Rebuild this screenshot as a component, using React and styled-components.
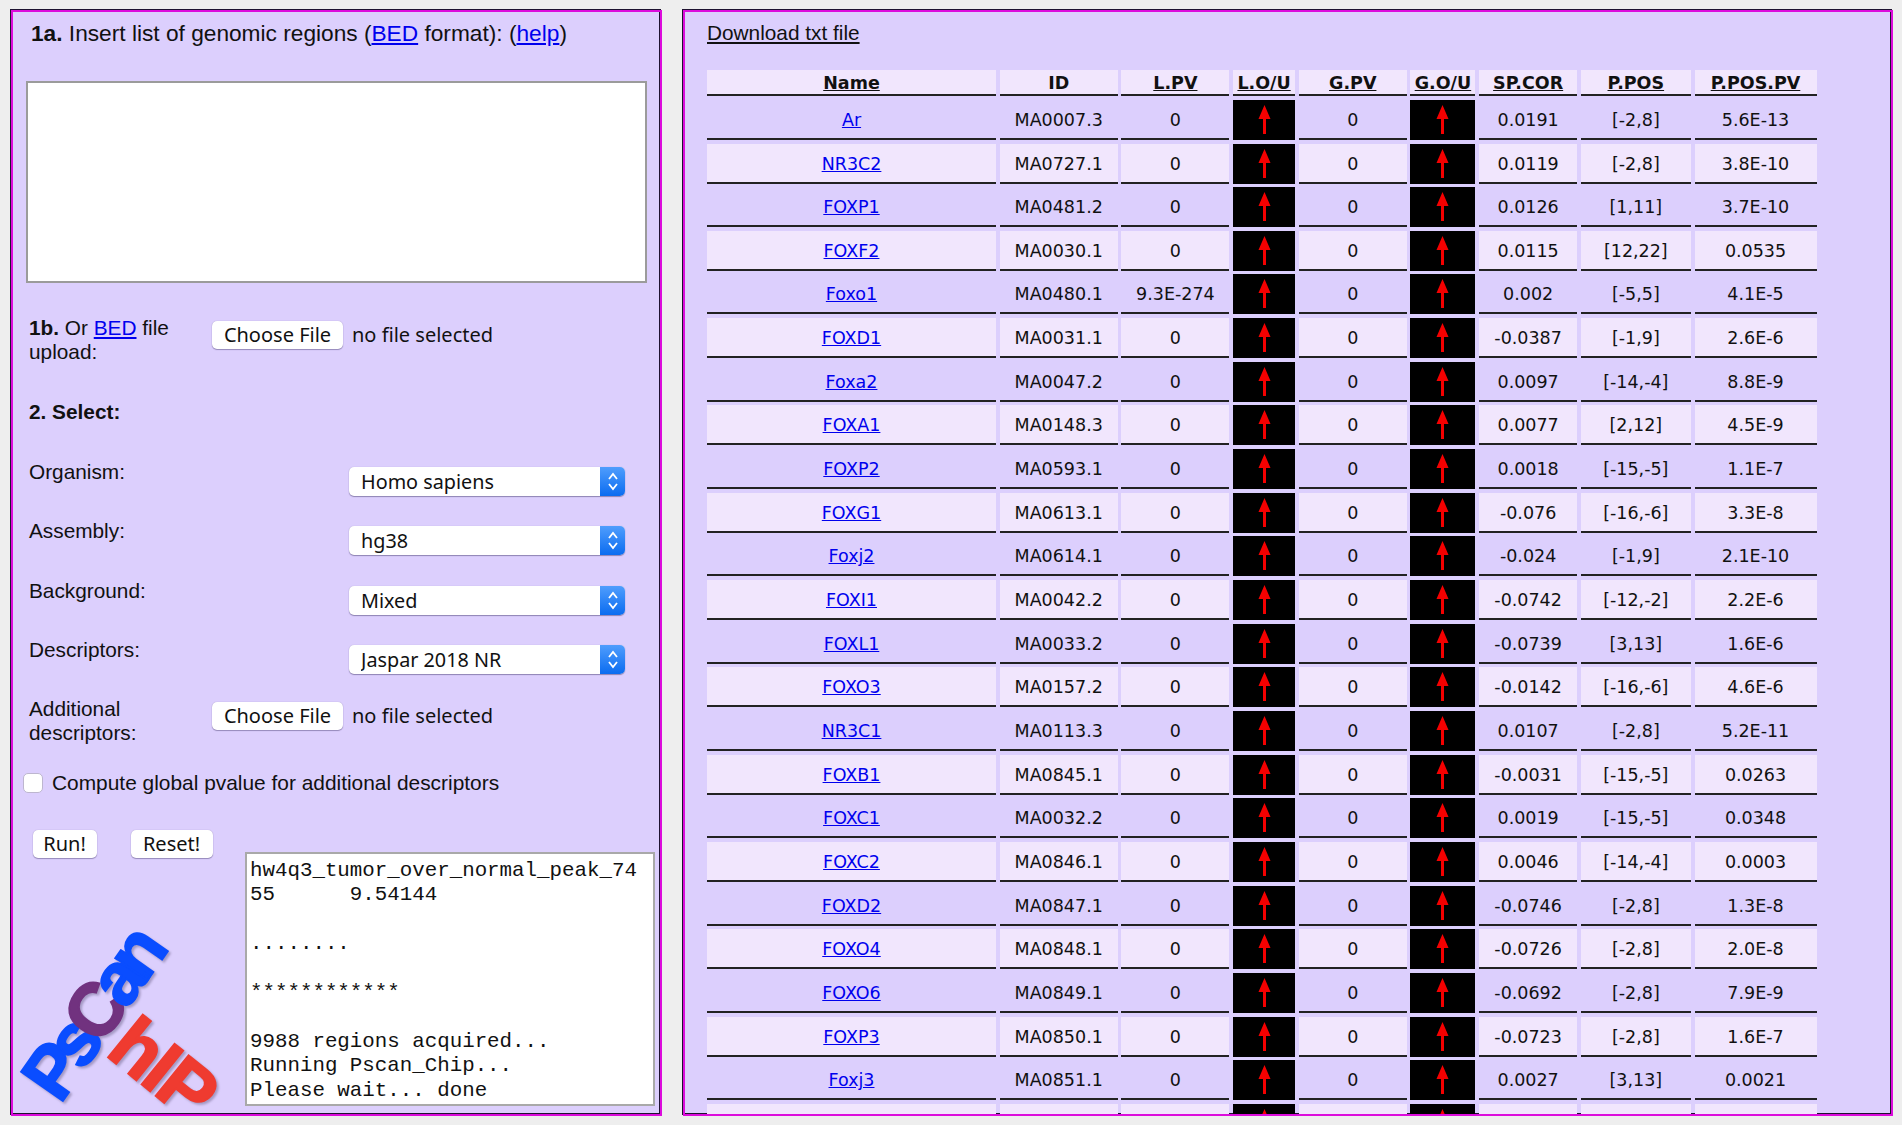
import React from 'react';
import styled, {createGlobalStyle} from 'styled-components';

const GlobalStyle = createGlobalStyle`
  html, body {
    margin: 0;
    padding: 0;
    background: #eeeeee;
  }
  body {
    font-family: "Liberation Sans", Arial, sans-serif;
    color: #111;
  }
`;

const Page = styled.div`
  display: flex;
  gap: 21px;
  padding: 10px 0 0 11px;
  width: 1902px;
  height: 1125px;
  box-sizing: border-box;
  overflow: hidden;
`;

const Panel = styled.div`
  box-sizing: border-box;
  height: 1106px;
  flex: none;
  width: ${props => props.$width}px;
  padding: ${props => props.$padding};
  background: #dccffd;
  border: 2px solid #dc0cdc;
  box-shadow: inset -1px -1px 0 #1e1230, -1px -1px 0 #1e1230;
  overflow: hidden;
`;

const Text = styled.div`
  font-size: 20.8px;
  line-height: 24.5px;
`;

const Title = styled(Text)`
  margin-left: 18px;
  font-size: 22.7px;
  white-space: nowrap;
`;

const Link = styled.a`
  color: #0000ee;
  text-decoration: underline;
`;

const RegionsInput = styled.textarea`
  display: block;
  box-sizing: border-box;
  width: 621px;
  height: 202px;
  margin: 35px 0 0 13px;
  border: 2px solid #9b9b9b;
  background: #fff;
  resize: none;
  outline: none;
`;

const UploadRow = styled.div`
  display: grid;
  grid-template-columns: 183px auto;
  margin: ${props => props.$margin} 0 0 16px;
`;

const FileField = styled.div`
  display: flex;
  align-items: center;
  gap: 9px;
  height: 28px;
  margin-top: ${props => props.$top}px;
`;

const PlainButton = styled.button`
  box-sizing: border-box;
  height: 28px;
  padding: 0;
  width: ${props => props.$width}px;
  border: none;
  border-radius: 5px;
  background: #fff;
  box-shadow: 0 1px 1px rgba(70, 60, 110, 0.45), 0 0 1px rgba(70, 60, 110, 0.4);
  font-family: "Noto Sans", sans-serif;
  font-size: 20px;
  color: #111;
`;

const FileState = styled.span`
  font-family: "Noto Sans", sans-serif;
  font-size: 20px;
  color: #111;
`;

const SectionHead = styled(Text)`
  margin: 35px 0 0 16px;
  font-weight: bold;
`;

const SelectRow = styled.div`
  display: grid;
  grid-template-columns: 320px 276px;
  height: 37px;
  margin: ${props => props.$top}px 0 0 16px;
`;

const SelectBox = styled.div`
  position: relative;
  height: 29px;
  margin-top: 7px;
`;

const NativeSelect = styled.select`
  appearance: none;
  display: block;
  width: 100%;
  height: 29px;
  padding: 0 0 0 12px;
  border: none;
  border-radius: 5px;
  background: #fff;
  box-shadow: 0 1px 1px rgba(70, 60, 110, 0.5), 0 0 1px rgba(70, 60, 110, 0.3);
  font-family: "Noto Sans", sans-serif;
  font-size: 19.8px;
  color: #111;
`;

const Stepper = styled.span`
  position: absolute;
  top: 0;
  right: 0;
  bottom: 0;
  width: 25px;
  display: flex;
  align-items: center;
  justify-content: center;
  border-radius: 0 5px 5px 0;
  background: linear-gradient(#4f9dfd, #0b6cf0);
  pointer-events: none;
`;

const CheckRow = styled.label`
  display: flex;
  align-items: center;
  gap: 9.5px;
  margin: 25px 0 0 9.5px;
  font-size: 20.9px;
  line-height: 24px;
`;

const Check = styled.input`
  appearance: none;
  box-sizing: border-box;
  width: 20px;
  height: 20px;
  margin: 0;
  border: 1px solid #bdb6cf;
  border-radius: 5px;
  background: #fff;
`;

const BottomRow = styled.div`
  display: flex;
  margin-top: 35px;
`;

const LeftColumn = styled.div`
  flex: none;
  width: 232px;
`;

const Actions = styled.div`
  display: flex;
  gap: 34px;
  margin-left: 19.5px;
`;

const Logo = styled.svg`
  display: block;
  margin-top: 53px;
  overflow: visible;
  filter: drop-shadow(2px 2px 1px rgba(110, 100, 140, 0.5));
  font-family: "Liberation Sans", Arial, sans-serif;
  font-weight: bold;
`;

const Output = styled.pre`
  box-sizing: border-box;
  flex: none;
  width: 410px;
  height: 254px;
  margin: 22px 0 0;
  padding: 5px 0 0 3px;
  border: 2px solid #a9a9a9;
  background: #fff;
  font-family: "Liberation Mono", monospace;
  font-size: 20.8px;
  line-height: 24.4px;
  color: #111;
  overflow: hidden;
`;

const Download = styled(Text)`
  color: #111;
  text-decoration: underline;
`;

const Grid = styled.div`
  display: grid;
  grid-template-columns: 289px 118px 108px 62px 108px 65px 98px 110px 122px;
  grid-template-rows: 26px;
  grid-auto-rows: 40px;
  column-gap: 3.7px;
  row-gap: 3.67px;
  margin-top: 24.7px;
  width: max-content;
`;

const Cell = styled.div`
  box-sizing: border-box;
  display: flex;
  align-items: center;
  justify-content: center;
  padding-top: 2px;
  background: ${props => (props.$light ? '#f1e6fd' : 'transparent')};
  border-bottom: 2px solid #222;
  font-family: "DejaVu Sans", sans-serif;
  font-size: 17.5px;
  color: #111;
  white-space: nowrap;
`;

const HeadCell = styled(Cell)`
  background: #f1e6fd;
  font-weight: bold;
  text-decoration: ${props => (props.$plain ? 'none' : 'underline')};
`;

const ArrowCell = styled.div`
  background: #000;
  display: flex;
  align-items: center;
  justify-content: center;
`;

const ArrowIcon = styled.svg`
  display: block;
  filter: blur(0.6px);
`;

const COLUMNS = ['Name', 'ID', 'L.PV', 'L.O/U', 'G.PV', 'G.O/U', 'SP.COR', 'P.POS', 'P.POS.PV'];

const ROWS = [
  ['Ar', 'MA0007.3', '0', '0.0191', '[-2,8]', '5.6E-13'],
  ['NR3C2', 'MA0727.1', '0', '0.0119', '[-2,8]', '3.8E-10'],
  ['FOXP1', 'MA0481.2', '0', '0.0126', '[1,11]', '3.7E-10'],
  ['FOXF2', 'MA0030.1', '0', '0.0115', '[12,22]', '0.0535'],
  ['Foxo1', 'MA0480.1', '9.3E-274', '0.002', '[-5,5]', '4.1E-5'],
  ['FOXD1', 'MA0031.1', '0', '-0.0387', '[-1,9]', '2.6E-6'],
  ['Foxa2', 'MA0047.2', '0', '0.0097', '[-14,-4]', '8.8E-9'],
  ['FOXA1', 'MA0148.3', '0', '0.0077', '[2,12]', '4.5E-9'],
  ['FOXP2', 'MA0593.1', '0', '0.0018', '[-15,-5]', '1.1E-7'],
  ['FOXG1', 'MA0613.1', '0', '-0.076', '[-16,-6]', '3.3E-8'],
  ['Foxj2', 'MA0614.1', '0', '-0.024', '[-1,9]', '2.1E-10'],
  ['FOXI1', 'MA0042.2', '0', '-0.0742', '[-12,-2]', '2.2E-6'],
  ['FOXL1', 'MA0033.2', '0', '-0.0739', '[3,13]', '1.6E-6'],
  ['FOXO3', 'MA0157.2', '0', '-0.0142', '[-16,-6]', '4.6E-6'],
  ['NR3C1', 'MA0113.3', '0', '0.0107', '[-2,8]', '5.2E-11'],
  ['FOXB1', 'MA0845.1', '0', '-0.0031', '[-15,-5]', '0.0263'],
  ['FOXC1', 'MA0032.2', '0', '0.0019', '[-15,-5]', '0.0348'],
  ['FOXC2', 'MA0846.1', '0', '0.0046', '[-14,-4]', '0.0003'],
  ['FOXD2', 'MA0847.1', '0', '-0.0746', '[-2,8]', '1.3E-8'],
  ['FOXO4', 'MA0848.1', '0', '-0.0726', '[-2,8]', '2.0E-8'],
  ['FOXO6', 'MA0849.1', '0', '-0.0692', '[-2,8]', '7.9E-9'],
  ['FOXP3', 'MA0850.1', '0', '-0.0723', '[-2,8]', '1.6E-7'],
  ['Foxj3', 'MA0851.1', '0', '0.0027', '[3,13]', '0.0021'],
];

const OUTPUT = `hw4q3_tumor_over_normal_peak_74
55      9.54144

........

************

9988 regions acquired...
Running Pscan_Chip...
Please wait... done`;

const UpArrow = () => (
  <ArrowIcon width="13" height="30" viewBox="0 0 13 30">
    <path d="M6.5 0 L12.5 14 H8 V29 H5 V14 H0.5 Z" fill="#f40000" />
  </ArrowIcon>
);

const StepperIcon = () => (
  <svg width="12" height="21" viewBox="0 0 12 21" fill="none" stroke="#fff" strokeWidth="1.8">
    <path d="M2 8 L6 3 L10 8" />
    <path d="M2 13 L6 18 L10 13" />
  </svg>
);

const Dropdown = ({label, value, top}) => (
  <SelectRow $top={top}>
    <Text>{label}</Text>
    <SelectBox>
      <NativeSelect defaultValue={value}>
        <option>{value}</option>
      </NativeSelect>
      <Stepper>
        <StepperIcon />
      </Stepper>
    </SelectBox>
  </SelectRow>
);

const FilePicker = ({top}) => (
  <FileField $top={top}>
    <PlainButton type="button" $width={131}>Choose File</PlainButton>
    <FileState>no file selected</FileState>
  </FileField>
);

const PscanLogo = () => (
  <Logo width="219" height="203" viewBox="13 910 219 203">
    <text
      x="60"
      y="1104"
      fontSize="74"
      letterSpacing="-9.5"
      fill="#0a4dff"
      stroke="#0a4dff"
      strokeWidth="2"
      transform="rotate(-55 60 1104)"
    >
      Ps
      <tspan fill="#71327f" stroke="#71327f">C</tspan>
      an
    </text>
    <text
      x="104"
      y="1053"
      fontSize="76"
      letterSpacing="-3"
      fill="#ef3b30"
      stroke="#ef3b30"
      strokeWidth="2"
      transform="rotate(39 104 1053)"
    >
      hIP
    </text>
  </Logo>
);

const Row = ({row, light}) => {
  const [name, id, lpv, cor, pos, posPv] = row;
  return (
    <>
      <Cell $light={light}>{name && <Link href="#">{name}</Link>}</Cell>
      <Cell $light={light}>{id}</Cell>
      <Cell $light={light}>{lpv}</Cell>
      <ArrowCell><UpArrow /></ArrowCell>
      <Cell $light={light}>{name && '0'}</Cell>
      <ArrowCell><UpArrow /></ArrowCell>
      <Cell $light={light}>{cor}</Cell>
      <Cell $light={light}>{pos}</Cell>
      <Cell $light={light}>{posPv}</Cell>
    </>
  );
};

const App = () => (
  <Page>
    <GlobalStyle />
    <Panel $width={651} $padding="9px 0 0 0">
      <Title>
        <b>1a.</b> Insert list of genomic regions (<Link href="#">BED</Link> format): (<Link href="#">help</Link>)
      </Title>
      <RegionsInput />
      <UploadRow $margin="33px">
        <Text>
          <b>1b.</b> Or <Link href="#">BED</Link> file
          <br />
          upload:
        </Text>
        <FilePicker top={5} />
      </UploadRow>
      <SectionHead>2. Select:</SectionHead>
      <Dropdown label="Organism:" value="Homo sapiens" top={36} />
      <Dropdown label="Assembly:" value="hg38" top={22.3} />
      <Dropdown label="Background:" value="Mixed" top={22.3} />
      <Dropdown label="Descriptors:" value="Jaspar 2018 NR" top={22.3} />
      <UploadRow $margin="22px">
        <Text>
          Additional
          <br />
          descriptors:
        </Text>
        <FilePicker top={5} />
      </UploadRow>
      <CheckRow>
        <Check type="checkbox" />
        Compute global pvalue for additional descriptors
      </CheckRow>
      <BottomRow>
        <LeftColumn>
          <Actions>
            <PlainButton type="button" $width={64}>Run!</PlainButton>
            <PlainButton type="button" $width={82}>Reset!</PlainButton>
          </Actions>
          <PscanLogo />
        </LeftColumn>
        <Output>{OUTPUT}</Output>
      </BottomRow>
    </Panel>
    <Panel $width={1210} $padding="9px 0 0 22px">
      <Download>Download txt file</Download>
      <Grid>
        {COLUMNS.map(column => (
          <HeadCell key={column} $plain={column === 'ID'}>{column}</HeadCell>
        ))}
        {ROWS.map((row, index) => (
          <Row key={row[0]} row={row} light={index % 2 === 1} />
        ))}
        <Row row={['', '', '', '', '', '']} light />
      </Grid>
    </Panel>
  </Page>
);

export default App;
